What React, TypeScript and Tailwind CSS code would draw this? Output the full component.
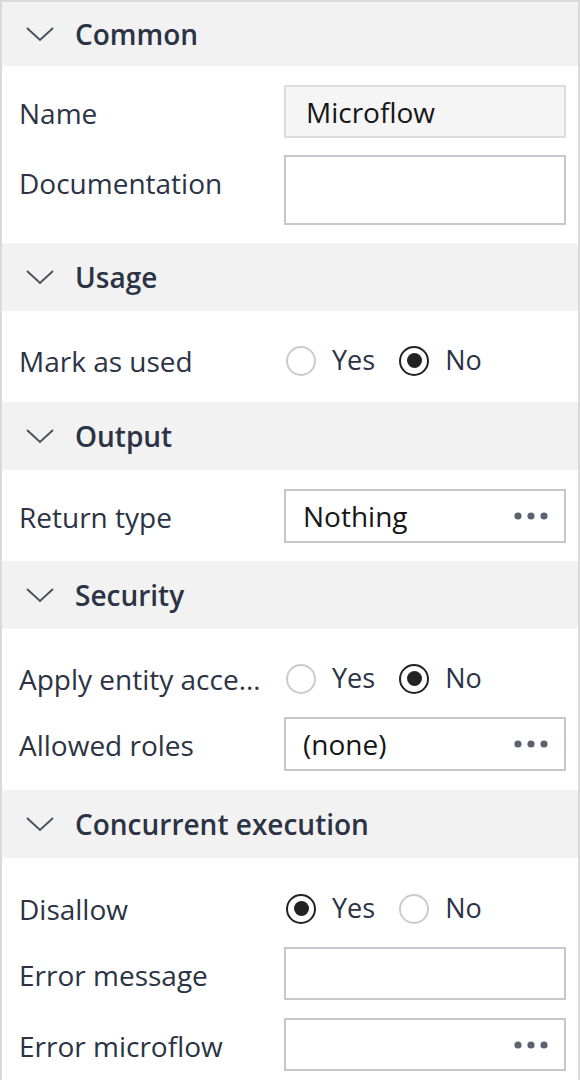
import React from 'react'

const font = { fontFamily: '"Open Sans", "Noto Sans", sans-serif' }

function Chevron() {
  return (
    <svg width="30" height="18" viewBox="0 0 30 18" className="shrink-0">
      <path d="M2 3 L15 15 L28 3" fill="none" stroke="#4b5260" strokeWidth="2" />
    </svg>
  )
}

function Dots() {
  return (
    <svg width="34" height="8" viewBox="0 0 34 8" className="shrink-0">
      <circle cx="4" cy="4" r="3.6" fill="#5b6270" />
      <circle cx="17" cy="4" r="3.6" fill="#5b6270" />
      <circle cx="30" cy="4" r="3.6" fill="#5b6270" />
    </svg>
  )
}

function Header({ title, first }: { title: string; first?: boolean }) {
  return (
    <div className={`flex ${first ? 'h-[64px]' : 'h-[68px]'} items-center gap-[20px] bg-[#f2f2f2] pl-[23px]`}>
      <Chevron />
      <span className="text-[28px] font-semibold text-[#2b3344]">{title}</span>
    </div>
  )
}

function Row({ label, children, radio }: { label: string; children: React.ReactNode; radio?: boolean }) {
  if (radio) {
    return (
      <div className="flex h-[54px] items-center pt-[9px]">
        <div className="w-[265px] shrink-0 truncate pr-[22px] text-[28px] text-[#2b3344]">{label}</div>
        <div className="flex-1">{children}</div>
      </div>
    )
  }
  return (
    <div className="flex items-start">
      <div className="h-[54px] w-[265px] shrink-0 truncate pr-[22px] pt-[7px] text-[28px] text-[#2b3344]">
        {label}
      </div>
      <div className="flex-1">{children}</div>
    </div>
  )
}

function TextBox({ value, height = 'h-[54px]', disabled, dots }: { value?: string; height?: string; disabled?: boolean; dots?: boolean }) {
  return (
    <div
      className={`flex ${height} items-center justify-between border-2 pr-[16px] ${
        disabled ? 'border-[#dcdcdc] bg-[#f5f5f5] pl-[20px]' : 'border-[#c6c6cb] bg-white pl-[17px]'
      }`}
    >
      <span className="text-[28px] text-[#161616]">{value}</span>
      {dots && <Dots />}
    </div>
  )
}

function Radio({ checked, label }: { checked: boolean; label: string }) {
  return (
    <div className="mr-[24px] flex items-center gap-4">
      <span
        className={`flex h-[30px] w-[30px] items-center justify-center rounded-full border-2 ${
          checked ? 'border-[#222]' : 'border-[#cbcbcf]'
        }`}
      >
        {checked && <span className="h-[15px] w-[15px] rounded-full bg-[#222]" />}
      </span>
      <span className="text-[27px] text-[#2b3344]">{label}</span>
    </div>
  )
}

function YesNo({ value }: { value: boolean }) {
  return (
    <div className="flex items-center pl-[2px]">
      <Radio checked={value} label="Yes" />
      <Radio checked={!value} label="No" />
    </div>
  )
}

export default function App() {
  return (
    <div style={font} className="w-[580px] border-2 border-[#dadada] bg-white">
      <Header title="Common" first />
      <div className="flex flex-col gap-4 pt-[19px] pb-[18px] pl-[17px] pr-[12px]">
        <Row label="Name">
          <TextBox value="Microflow" height="h-[53px]" disabled />
        </Row>
        <Row label="Documentation">
          <TextBox height="h-[70px]" />
        </Row>
      </div>

      <Header title="Usage" />
      <div className="flex flex-col gap-4 pt-[18px] pb-[19px] pl-[17px] pr-[12px]">
        <Row label="Mark as used" radio>
          <YesNo value={false} />
        </Row>
      </div>

      <Header title="Output" />
      <div className="flex flex-col gap-4 pt-[19px] pb-[18px] pl-[17px] pr-[12px]">
        <Row label="Return type">
          <TextBox value="Nothing" dots />
        </Row>
      </div>

      <Header title="Security" />
      <div className="flex flex-col gap-4 pt-[18px] pb-[19px] pl-[17px] pr-[12px]">
        <Row label="Apply entity access" radio>
          <YesNo value={false} />
        </Row>
        <Row label="Allowed roles">
          <TextBox value="(none)" dots />
        </Row>
      </div>

      <Header title="Concurrent execution" />
      <div className="flex flex-col pt-[19px] pb-[8px] pl-[17px] pr-[12px]">
        <Row label="Disallow" radio>
          <YesNo value={true} />
        </Row>
        <div className="mt-4">
          <Row label="Error message">
            <TextBox height="h-[53px]" />
          </Row>
        </div>
        <div className="mt-[17px]">
          <Row label="Error microflow">
            <TextBox height="h-[53px]" dots />
          </Row>
        </div>
      </div>
    </div>
  )
}
